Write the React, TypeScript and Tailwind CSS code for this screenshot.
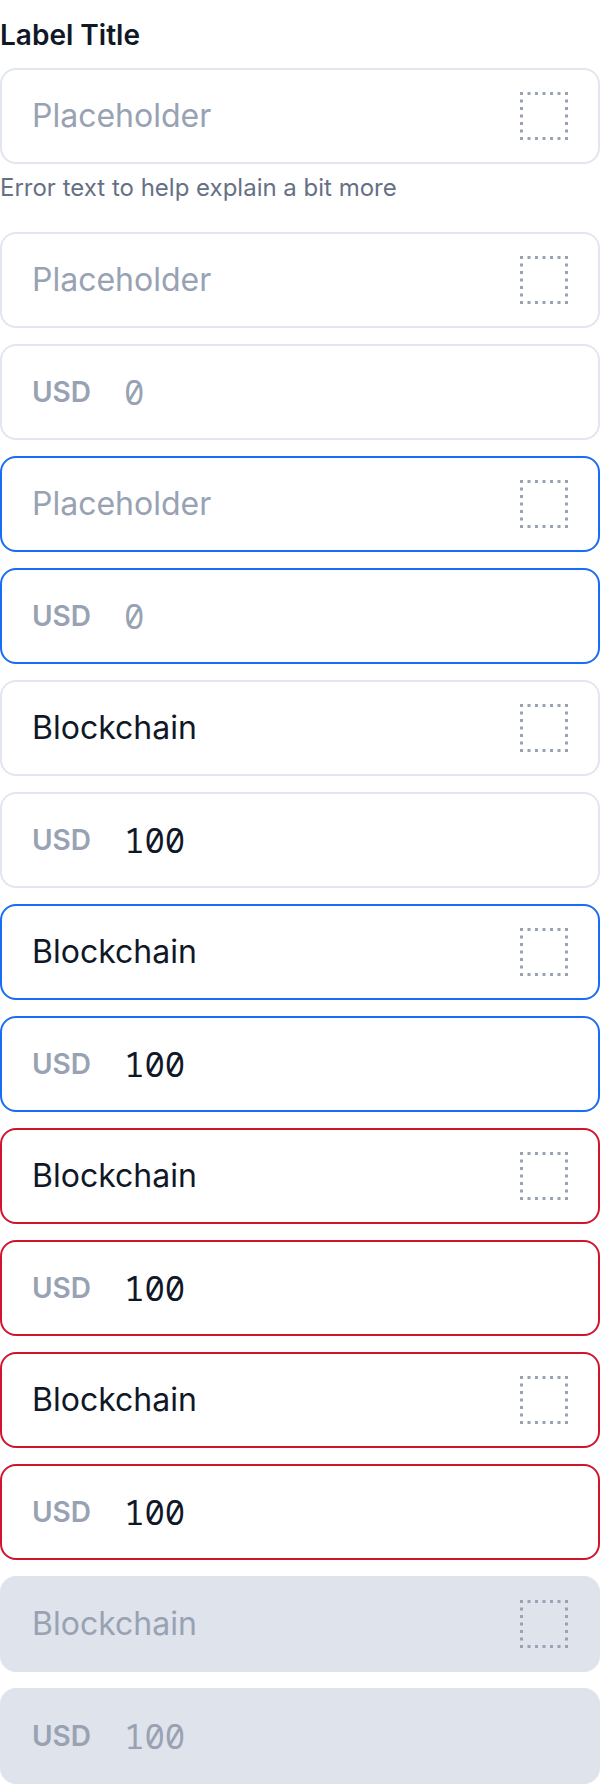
import React from "react";

type Variant = "default" | "focus" | "error" | "disabled";

// dotted square used as the trailing icon slot
function DottedIcon() {
    const steps = [0, 1, 2, 3, 4, 5, 6];
    return (
        <svg width="48" height="48" viewBox="0 0 48 48" className="shrink-0">
            {steps.map((i) => (
                <g key={i} fill="#98a2b3">
                    <rect x={i * 7.5} y={0} width={3} height={3} />
                    <rect x={i * 7.5} y={45} width={3} height={3} />
                    <rect x={0} y={i * 7.5} width={3} height={3} />
                    <rect x={45} y={i * 7.5} width={3} height={3} />
                </g>
            ))}
        </svg>
    );
}

const boxStyles: Record<Variant, string> = {
    default: "bg-white border-2 border-[#e2e6ee]",
    focus: "bg-white border-2 border-[#1a6cf0]",
    error: "bg-white border-2 border-[#d2142c]",
    disabled: "bg-[#dfe3eb] border-2 border-[#dfe3eb]",
};

function TextField({ value, variant = "default" }: { value?: string; variant?: Variant }) {
    const muted = !value || variant === "disabled";
    return (
        <div className={`h-[96px] rounded-2xl flex items-center pl-[30px] pr-[30px] ${boxStyles[variant]}`}>
            <span className={`flex-1 text-[32px] ${muted ? "text-[#98a2b3]" : "text-[#101828]"}`}>
                {value ?? "Placeholder"}
            </span>
            <DottedIcon />
        </div>
    );
}

function AmountField({ value, variant = "default" }: { value?: string; variant?: Variant }) {
    const muted = !value || variant === "disabled";
    return (
        <div className={`h-[96px] rounded-2xl flex items-center pl-[30px] pr-[30px] ${boxStyles[variant]}`}>
            <span className="w-[92px] shrink-0 text-[28px] font-semibold text-[#98a2b3]">USD</span>
            <span
                className={`text-[34px] font-['Noto_Sans_Mono','Roboto_Mono',monospace] ${muted ? "text-[#98a2b3]" : "text-[#101828]"}`}
            >
                {value ?? "0"}
            </span>
        </div>
    );
}

export default function App() {
    return (
        <div className="bg-white font-['Inter',sans-serif] flex flex-col">
            <label className="pt-[17px] mb-[15px] text-[28px] leading-9 font-semibold text-[#101828]">
                Label Title
            </label>
            <TextField />
            <p className="mt-2 text-[24px] leading-8 text-[#667085]">
                Error text to help explain a bit more
            </p>
            <div className="mt-7 flex flex-col gap-4">
                <TextField />
                <AmountField />
                <TextField variant="focus" />
                <AmountField variant="focus" />
                <TextField value="Blockchain" />
                <AmountField value="100" />
                <TextField value="Blockchain" variant="focus" />
                <AmountField value="100" variant="focus" />
                <TextField value="Blockchain" variant="error" />
                <AmountField value="100" variant="error" />
                <TextField value="Blockchain" variant="error" />
                <AmountField value="100" variant="error" />
                <TextField value="Blockchain" variant="disabled" />
                <AmountField value="100" variant="disabled" />
            </div>
        </div>
    );
}
